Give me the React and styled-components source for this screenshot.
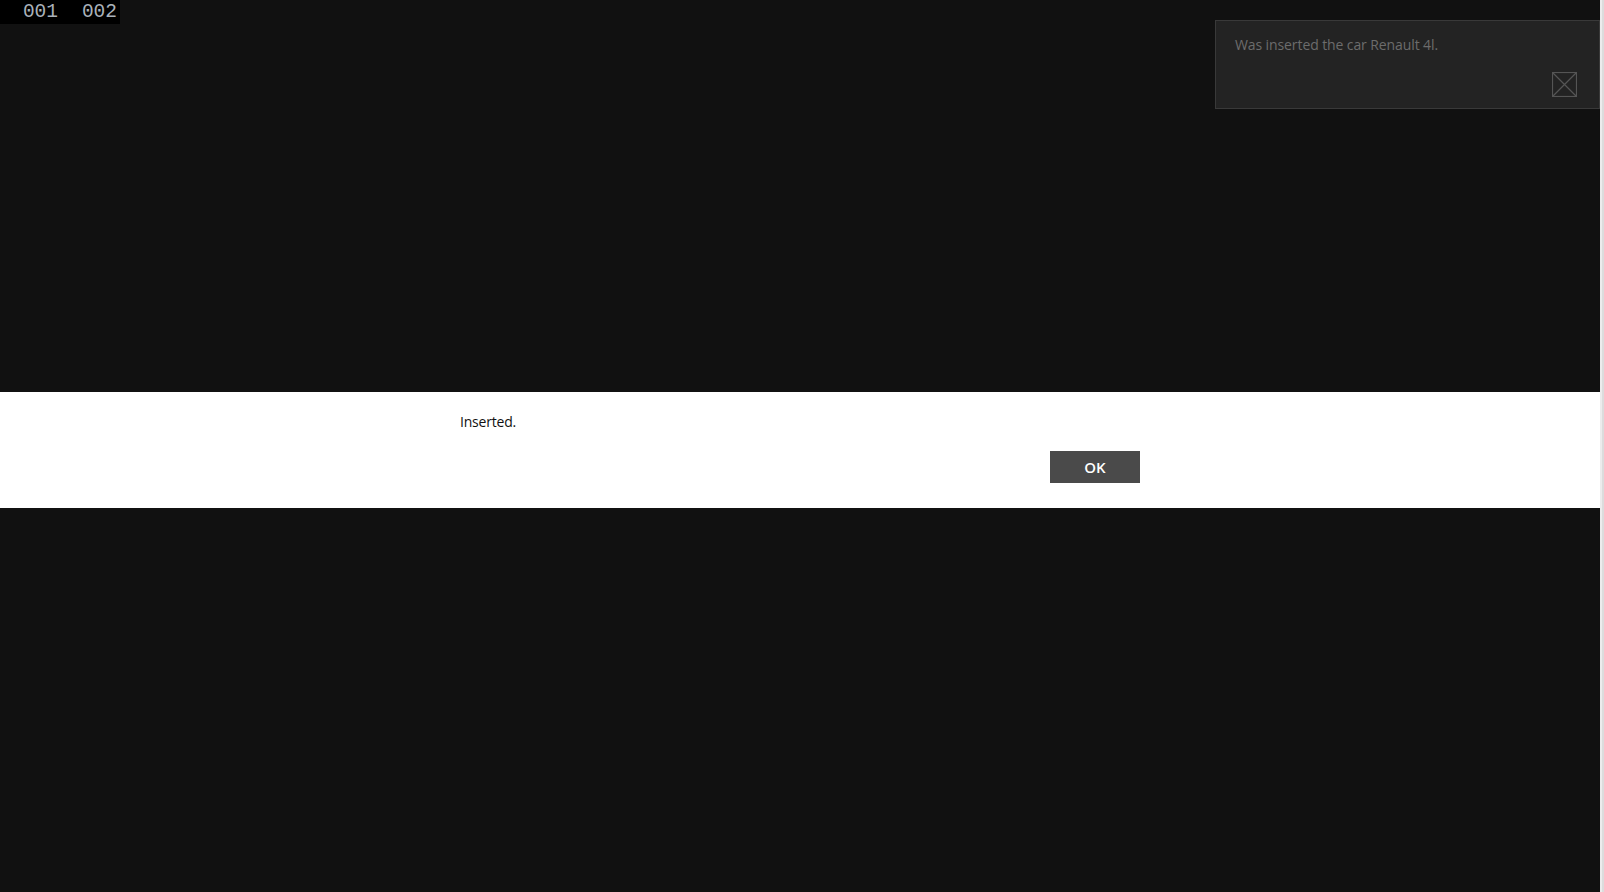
import React from "react";
import styled, { createGlobalStyle } from "styled-components";

const Global = createGlobalStyle`
  html {
    background: #111111;
  }
  body {
    margin: 0;
    background: #111111;
    font-family: "Open Sans", "Noto Sans", sans-serif;
  }
`;

const Page = styled.div`
  min-height: 892px;
  background: #111111;
`;

const ScrollTrack = styled.div`
  position: fixed;
  top: 0;
  right: 0;
  bottom: 0;
  width: 4px;
  background: linear-gradient(to right, #ececec 0 2px, #dcdcdc 2px 4px);
`;

const Counter = styled.div`
  display: inline-flex;
  height: 24px;
  width: 120px;
  background: #000000;
  font-family: "Liberation Mono", "DejaVu Sans Mono", monospace;
  font-size: 19.5px;
  line-height: 24px;
  color: #aab2ba;
`;

const CounterField = styled.span`
  width: ${(p) => p.$w}px;
  text-align: right;
  white-space: pre;
`;

const Toast = styled.div`
  position: fixed;
  top: 20px;
  right: 4px;
  width: 385px;
  height: 89px;
  box-sizing: border-box;
  background: #232323;
  border: 1px solid #393939;
  padding: 14px 20px 0 19px;
  display: flex;
  flex-direction: column;
`;

const ToastText = styled.div`
  font-size: 14px;
  line-height: 20px;
  color: #6c6c6c;
  letter-spacing: -0.1px;
`;

const CloseButton = styled.button`
  position: absolute;
  right: 22px;
  bottom: 11px;
  width: 25px;
  height: 25px;
  padding: 0;
  border: none;
  background: transparent;
  display: flex;
  cursor: pointer;
`;

const Overlay = styled.div`
  position: fixed;
  top: 0;
  left: 0;
  right: 4px;
  bottom: 0;
  padding-top: 392px;
  pointer-events: none;
`;

const Band = styled.div`
  background: #ffffff;
  height: 116px;
  box-sizing: border-box;
  padding-top: 20px;
  display: flex;
  justify-content: center;
  pointer-events: auto;
`;

const DialogBody = styled.div`
  width: 680px;
  display: flex;
  flex-direction: column;
`;

const Message = styled.div`
  font-size: 14px;
  line-height: 20px;
  color: #111111;
  letter-spacing: -0.2px;
  height: 20px;
`;

const Actions = styled.div`
  display: flex;
  justify-content: flex-end;
  margin-top: 19px;
`;

const OkButton = styled.button`
  width: 90px;
  height: 32px;
  border: none;
  background: #4a4a4a;
  color: #ffffff;
  font-family: "Open Sans", "Noto Sans", sans-serif;
  font-weight: 600;
  font-size: 15px;
  padding: 0;
  cursor: pointer;
`;

export default function App() {
  return (
    <>
      <Global />
      <Page>
        <Counter>
          <CounterField $w={58}>001</CounterField>
          <CounterField $w={59}>002</CounterField>
        </Counter>
      </Page>
      <ScrollTrack />
      <Toast>
        <ToastText>Was inserted the car Renault 4l.</ToastText>
        <CloseButton aria-label="Close">
          <svg width="25" height="25" viewBox="0 0 25 25">
            <rect x="0.5" y="0.5" width="24" height="24" fill="none" stroke="#555555" strokeWidth="1.2" />
            <path d="M1 1 L24 24 M24 1 L1 24" stroke="#555555" strokeWidth="1.2" />
          </svg>
        </CloseButton>
      </Toast>
      <Overlay>
        <Band>
          <DialogBody>
            <Message>Inserted.</Message>
            <Actions>
              <OkButton>OK</OkButton>
            </Actions>
          </DialogBody>
        </Band>
      </Overlay>
    </>
  );
}
